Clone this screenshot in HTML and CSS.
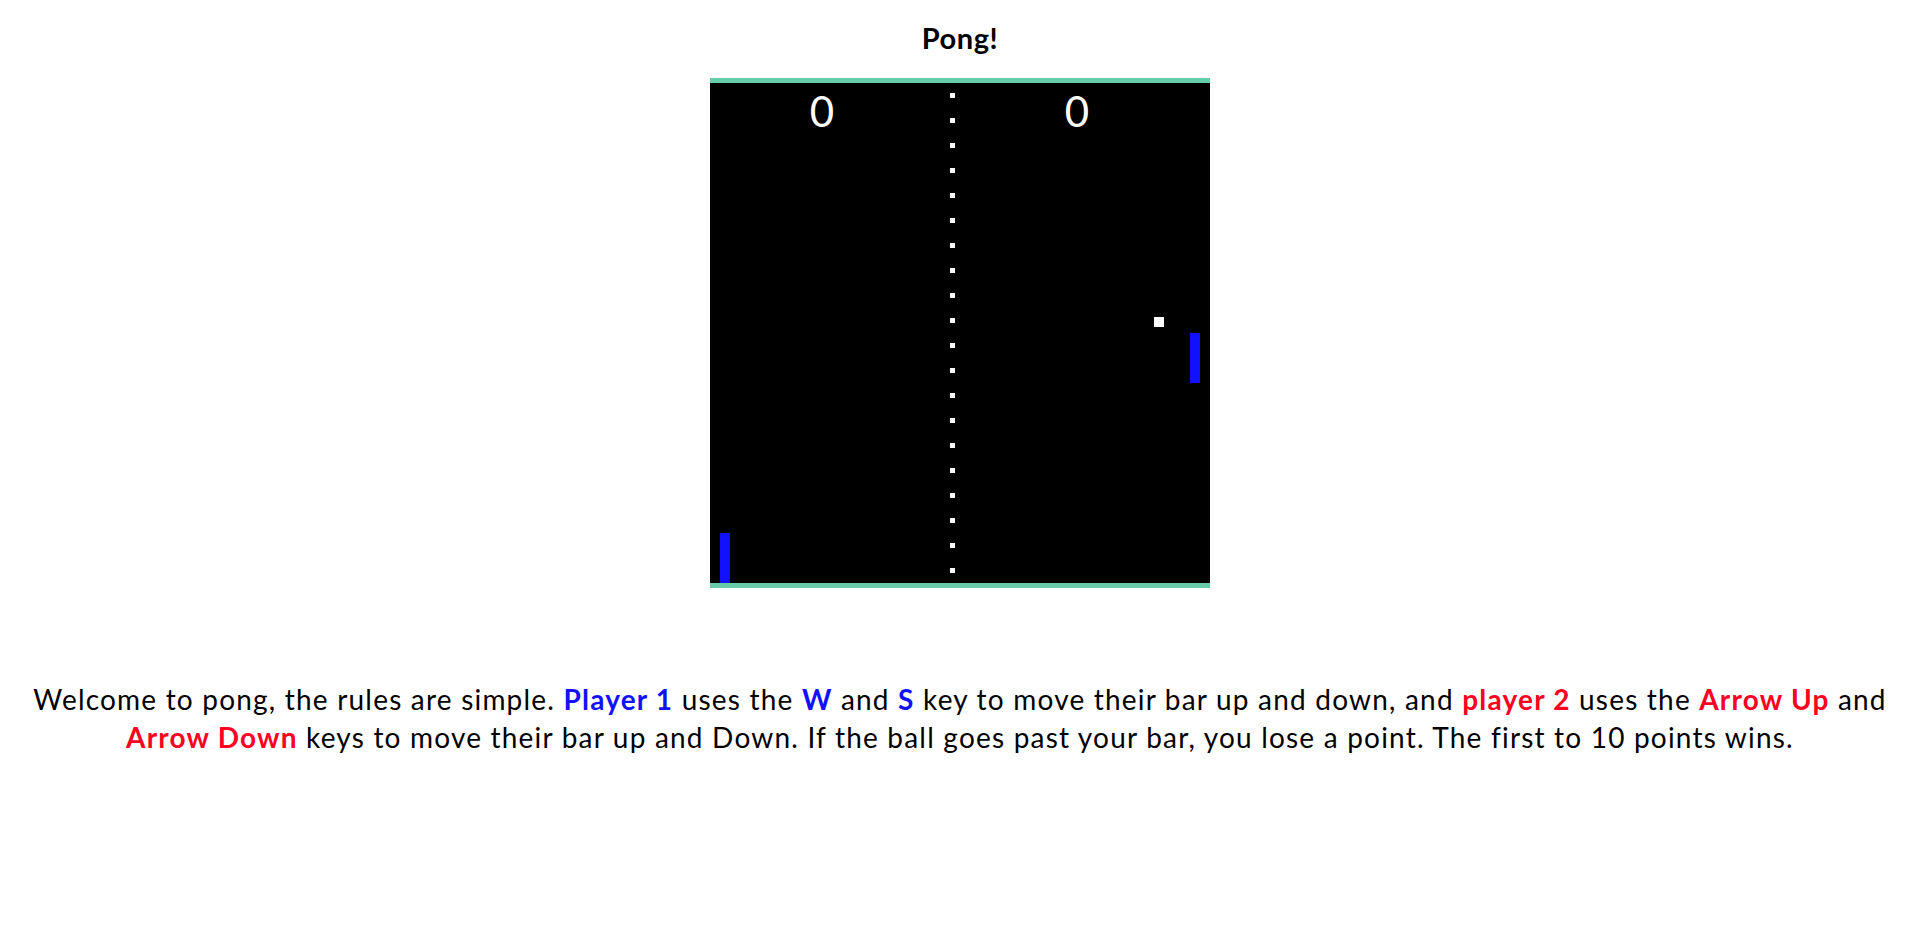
FILE: index.html
```html
<!DOCTYPE html>
<html lang="en">
<head>
<meta charset="utf-8">
<title>Pong!</title>
<link rel="stylesheet" href="styles.css">
</head>
<body>
<h1 class="title">Pong!</h1>
<div class="board">
  <svg class="field" width="500" height="500" viewBox="0 0 500 500" shape-rendering="crispEdges">
    <rect x="0" y="0" width="500" height="500" fill="#000"/>
    <g fill="#fff">
      <rect x="240" y="10" width="5" height="5"/>
      <rect x="240" y="35" width="5" height="5"/>
      <rect x="240" y="60" width="5" height="5"/>
      <rect x="240" y="85" width="5" height="5"/>
      <rect x="240" y="110" width="5" height="5"/>
      <rect x="240" y="135" width="5" height="5"/>
      <rect x="240" y="160" width="5" height="5"/>
      <rect x="240" y="185" width="5" height="5"/>
      <rect x="240" y="210" width="5" height="5"/>
      <rect x="240" y="235" width="5" height="5"/>
      <rect x="240" y="260" width="5" height="5"/>
      <rect x="240" y="285" width="5" height="5"/>
      <rect x="240" y="310" width="5" height="5"/>
      <rect x="240" y="335" width="5" height="5"/>
      <rect x="240" y="360" width="5" height="5"/>
      <rect x="240" y="385" width="5" height="5"/>
      <rect x="240" y="410" width="5" height="5"/>
      <rect x="240" y="435" width="5" height="5"/>
      <rect x="240" y="460" width="5" height="5"/>
      <rect x="240" y="485" width="5" height="5"/>
      <rect x="444" y="234" width="10" height="10"/>
    </g>
    <rect x="10" y="450" width="10" height="50" fill="#1111ff"/>
    <rect x="480" y="250" width="10" height="50" fill="#1111ff"/>
    <text class="score" x="112" y="44" text-anchor="middle">0</text>
    <text class="score" x="367" y="44" text-anchor="middle">0</text>
  </svg>
</div>
<p class="rules">Welcome to pong, the rules are simple. <b class="p1">Player 1</b> uses the <b class="p1">W</b> and <b class="p1">S</b> key to move their bar up and down, and <b class="p2">player 2</b> uses the <b class="p2">Arrow Up</b> and <b class="p2">Arrow Down</b> keys to move their bar up and Down. If the ball goes past your bar, you lose a point. The first to 10 points wins.</p>
</body>
</html>
```
FILE: styles.css
```css
html, body {
  margin: 0;
  padding: 0;
  background: #fff;
}
body {
  font-family: Lato, "Open Sans", "Liberation Sans", sans-serif;
  color: #000;
}
.title {
  margin: 21px 0 0;
  font-size: 29px;
  line-height: 34px;
  font-weight: 700;
  letter-spacing: 0.6px;
  text-align: center;
}
.board {
  display: flex;
  justify-content: center;
  margin-top: 23px;
}
.field {
  display: block;
  border-top: 5px solid #66cdaa;
  border-bottom: 5px solid #66cdaa;
}
.score {
  fill: #fff;
  font-family: Lato, "Open Sans", sans-serif;
  font-size: 42px;
  font-weight: 400;
  letter-spacing: 0;
}
.rules {
  margin: 92px 8px 0;
  font-size: 28px;
  line-height: 38px;
  letter-spacing: 1.2px;
  text-align: center;
}
.p1 { color: #1111ff; }
.p2 { color: #ff0022; }
```
